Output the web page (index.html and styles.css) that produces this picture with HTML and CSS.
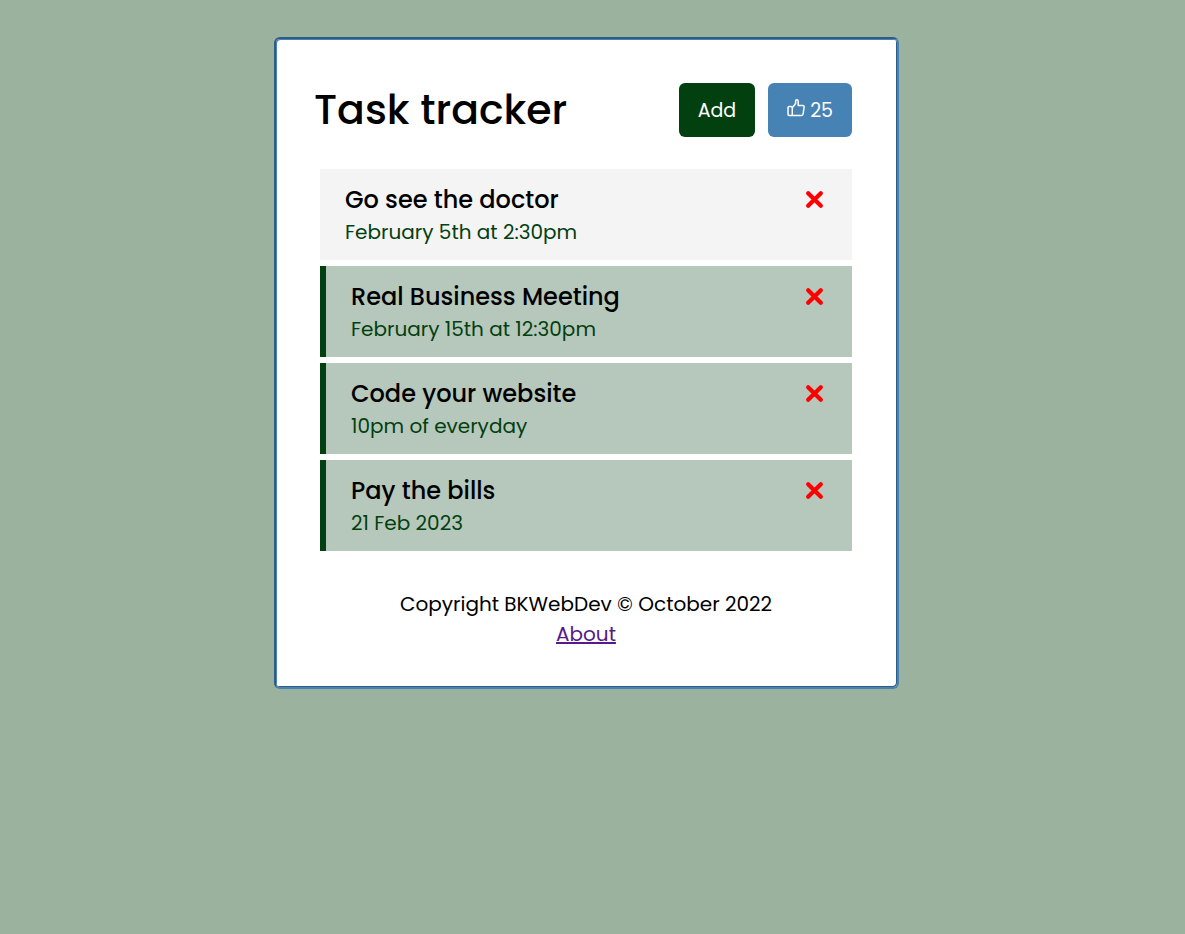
FILE: index.html
```html
<!DOCTYPE html>
<html lang="en">
<head>
<meta charset="utf-8">
<meta name="viewport" content="width=device-width, initial-scale=1">
<title>Task tracker</title>
<link rel="stylesheet" href="styles.css">
</head>
<body>
<svg class="sprite" aria-hidden="true">
  <symbol id="cross" viewBox="0 0 18 18"><path d="M3 3 15 15M15 3 3 15"/></symbol>
</svg>
<div class="card">
  <header class="header">
    <h1 class="title">Task tracker</h1>
    <div class="actions">
      <button class="btn btn-add" type="button">Add</button>
      <button class="btn btn-like" type="button"><svg class="thumb" viewBox="0 0 18 18" aria-hidden="true"><path d="M2.300 7.500H4q1.300 0 1.300 1.300v6.400q0 1.300-1.300 1.300H2.300Q1 16.500 1 15.200V8.800q0-1.300 1.300-1.300zM5.300 8.800 8.600 4.500V2.200Q8.600.8 9.700.8q1.500 0 1.500 1.700V6.500h4.600q1.500 0 1.300 1.500l-1 7q-.2 1.500-1.600 1.500H4"/></svg><span>25</span></button>
    </div>
  </header>
  <main class="tasks">
    <article class="task">
      <div><h2 class="task-name">Go see the doctor</h2><p class="task-day">February 5th at 2:30pm</p></div>
      <button class="remove" type="button" aria-label="Delete Go see the doctor"><svg class="cross"><use href="#cross"/></svg></button>
    </article>
    <article class="task reminder">
      <div><h2 class="task-name">Real Business Meeting</h2><p class="task-day">February 15th at 12:30pm</p></div>
      <button class="remove" type="button" aria-label="Delete Real Business Meeting"><svg class="cross"><use href="#cross"/></svg></button>
    </article>
    <article class="task reminder">
      <div><h2 class="task-name">Code your website</h2><p class="task-day">10pm of everyday</p></div>
      <button class="remove" type="button" aria-label="Delete Code your website"><svg class="cross"><use href="#cross"/></svg></button>
    </article>
    <article class="task reminder">
      <div><h2 class="task-name">Pay the bills</h2><p class="task-day">21 Feb 2023</p></div>
      <button class="remove" type="button" aria-label="Delete Pay the bills"><svg class="cross"><use href="#cross"/></svg></button>
    </article>
  </main>
  <footer class="footer">
    <p>Copyright BKWebDev © October 2022</p>
    <a class="about" href="#about">About</a>
  </footer>
</div>
</body>
</html>
```
FILE: styles.css
```css
* {
  box-sizing: border-box;
  margin: 0;
  padding: 0;
}

body {
  padding: 37px 12px 37px 0;
  background: #9ab29e;
  color: #000;
  font-family: Poppins, Inter, sans-serif;
  font-size: 20px;
  line-height: 30px;
}

.sprite {
  display: none;
}

/* Two-tone grooved frame: border outside, inset shadow inside */
.card {
  max-width: 625px;
  margin: 0 auto;
  padding: 44px 45px 38px 38px;
  border: 2px solid;
  border-color: #315b82 steelblue steelblue #315b82;
  border-radius: 6px;
  background: #fff;
  box-shadow: inset 1px 1px steelblue, inset -1px -1px #315b82;
}

.header {
  display: flex;
  align-items: center;
  justify-content: space-between;
  margin-bottom: 32px;
}

.title {
  font-size: 41px;
  font-weight: 500;
  line-height: 54px;
}

.actions {
  display: flex;
  gap: 13px;
}

.btn {
  display: flex;
  align-items: center;
  gap: 5px;
  padding: 13px 19px 11px;
  border: 0;
  border-radius: 6px;
  color: #fff;
  font: inherit;
  font-size: 19px;
  line-height: 30px;
  cursor: pointer;
}

.btn-add {
  background: #024010;
}

.btn-like {
  background: steelblue;
}

.thumb {
  width: 18px;
  height: 18px;
  margin-bottom: 6px;
  fill: none;
  stroke: #fff;
  stroke-width: 1.5;
  stroke-linejoin: round;
}

.tasks {
  display: flex;
  flex-direction: column;
  gap: 6px;
  margin-left: 6px;
}

.task {
  display: flex;
  align-items: flex-start;
  justify-content: space-between;
  padding: 13px 28px 13px 25px;
  background: #f4f4f4;
}

.reminder {
  border-left: 6px solid #024010;
  background: #b6c8bb;
}

.task-name {
  font-size: 24px;
  font-weight: 500;
  line-height: 35px;
}

.task-day {
  color: #024010;
}

.remove {
  display: flex;
  margin-top: 8px;
  border: 0;
  background: none;
  cursor: pointer;
}

.cross {
  width: 19px;
  height: 19px;
  fill: none;
  stroke: red;
  stroke-width: 4;
  stroke-linecap: round;
}

.footer {
  margin: 38px 0 0 6px;
  text-align: center;
}

.about {
  color: #551a8b;
}
```
